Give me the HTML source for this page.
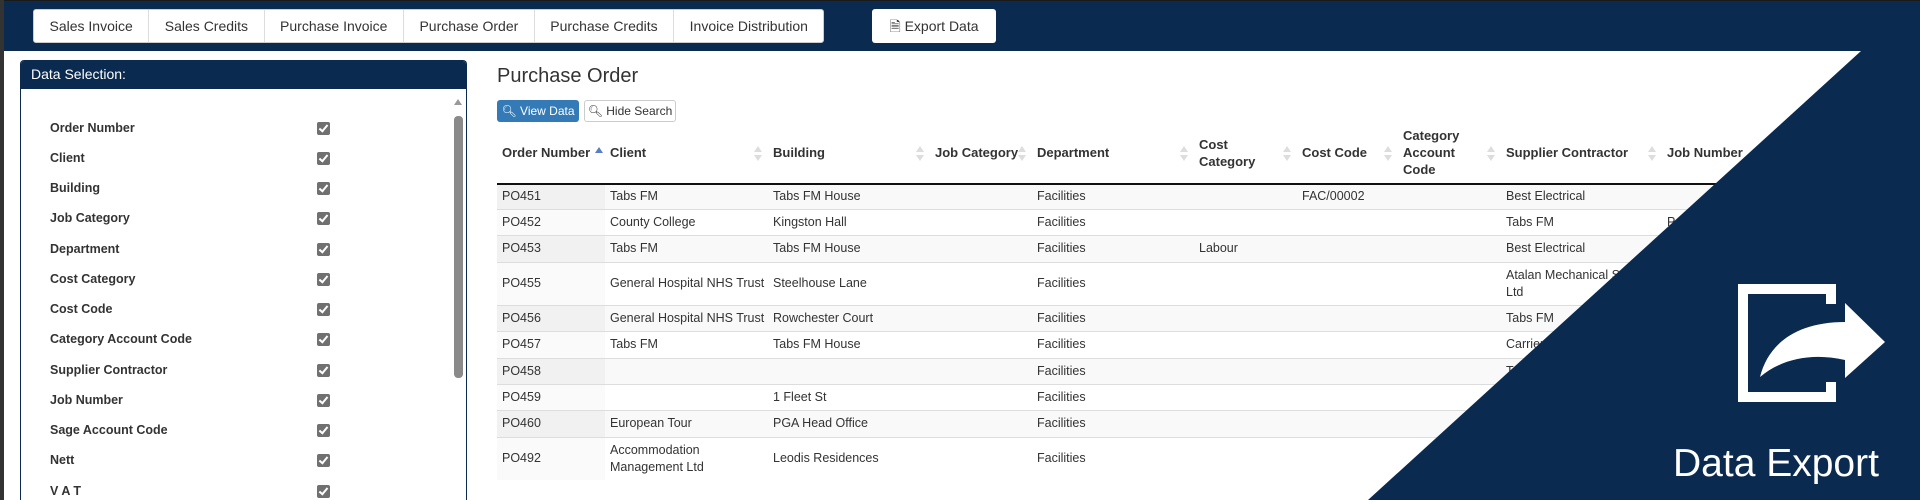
<!DOCTYPE html>
<html style="overflow:hidden;width:1920px;height:500px"><head><meta charset="utf-8"><style>
*{box-sizing:border-box;margin:0;padding:0}
body{width:1920px;height:500px;overflow:hidden;background:#fff;font-family:"Liberation Sans",Arial,sans-serif;color:#333;position:relative;font-size:13px}
.top{position:absolute;left:0;top:0;width:1920px;height:51px;background:#0b2a4f;border-top:1px solid #1a1a1a}
.strip{position:absolute;left:0;top:0;width:4px;height:500px;background:#333}
.tabs{position:absolute;left:33px;top:9px;height:34px;display:flex;background:#fff;border:1px solid #ccc;border-radius:3px}
.tabs div{height:32px;line-height:32px;padding:0 15.5px;font-size:14px;border-right:1px solid #ddd;color:#333}
.tabs div:last-child{border-right:none}
.exp{position:absolute;left:872px;top:9px;width:124px;height:34px;background:#fff;border-radius:3px;line-height:34px;font-size:14px;text-align:center}
.panel{position:absolute;left:20px;top:60px;width:447px;height:440px;border:1px solid #0b2a4f;border-bottom:none;border-radius:4px 4px 0 0;background:#fff;overflow:hidden}
.ph{height:28px;background:#0b2a4f;color:#fff;font-size:14px;line-height:26px;padding-left:10px}
.item{position:absolute;left:29px;font-size:12.5px;font-weight:bold;color:#333}
.cb{position:absolute;left:296px;width:13px;height:13px;background:#707070;border-radius:2px}
.cb:after{content:"";position:absolute;left:4px;top:1px;width:3px;height:7px;border:solid #fff;border-width:0 2px 2px 0;transform:rotate(40deg)}
.sb{position:absolute;left:433px;top:55px;width:9px;height:262px;background:#8a8a8a;border-radius:4px}
.sbu{position:absolute;left:433px;top:38px;width:0;height:0;border-left:4px solid transparent;border-right:4px solid transparent;border-bottom:6px solid #999}
h1{position:absolute;left:497px;top:65px;font-size:20px;font-weight:normal;color:#333}
.bv{position:absolute;left:497px;top:100px;width:82px;height:22px;background:#337ab7;border-radius:3px;color:#fff;font-size:12px;line-height:22px;text-align:center}
.bh{position:absolute;left:584px;top:100px;width:92px;height:22px;border:1px solid #ccc;border-radius:3px;font-size:12px;line-height:20px;text-align:center}
table{position:absolute;left:497px;top:122px;border-collapse:collapse;width:1500px;table-layout:fixed}
th{height:62px;text-align:left;font-weight:bold;padding:0 4px 0 5px;border-bottom:2px solid #111;position:relative;line-height:17px;font-size:13px;vertical-align:middle}
th .s{position:absolute;right:6px;top:24px;width:0;height:0;border-left:4px solid transparent;border-right:4px solid transparent;border-bottom:6px solid #ddd}
th .s:after{content:"";position:absolute;left:-4px;top:9px;border-left:4px solid transparent;border-right:4px solid transparent;border-top:6px solid #ddd}
th .up{position:absolute;left:98px;top:25px;border-left:4px solid transparent;border-right:4px solid transparent;border-bottom:6px solid #5a7dc4}
td{padding:0 4px 0 5px;border-top:1px solid #ddd;line-height:17px;font-size:12.5px;vertical-align:middle;white-space:nowrap;overflow:hidden}
td.w{white-space:normal}
tbody tr:nth-child(odd) td{background:#f9f9f9}
td:first-child{background:#f1f1f1!important}
tbody tr:nth-child(even) td:first-child{background:#fafafa!important}
.ov{position:absolute;left:0;top:0}
.de{position:absolute;left:1673px;top:442px;font-size:39px;color:#fff;font-family:"Liberation Sans",sans-serif}
</style></head><body>
<div class="top"></div><div class="strip"></div>
<div class="tabs"><div>Sales Invoice</div><div>Sales Credits</div><div>Purchase Invoice</div><div>Purchase Order</div><div>Purchase Credits</div><div>Invoice Distribution</div></div>
<div class="exp">🗎 Export Data</div>
<div class="panel"><div class="ph">Data Selection:</div>
<div class="sbu"></div><div class="sb"></div>
<div class="item" style="top:60px">Order Number</div><div class="cb" style="top:61px"></div>
<div class="item" style="top:90px">Client</div><div class="cb" style="top:91px"></div>
<div class="item" style="top:120px">Building</div><div class="cb" style="top:121px"></div>
<div class="item" style="top:150px">Job Category</div><div class="cb" style="top:151px"></div>
<div class="item" style="top:181px">Department</div><div class="cb" style="top:182px"></div>
<div class="item" style="top:211px">Cost Category</div><div class="cb" style="top:212px"></div>
<div class="item" style="top:241px">Cost Code</div><div class="cb" style="top:242px"></div>
<div class="item" style="top:271px">Category Account Code</div><div class="cb" style="top:272px"></div>
<div class="item" style="top:302px">Supplier Contractor</div><div class="cb" style="top:303px"></div>
<div class="item" style="top:332px">Job Number</div><div class="cb" style="top:333px"></div>
<div class="item" style="top:362px">Sage Account Code</div><div class="cb" style="top:363px"></div>
<div class="item" style="top:392px">Nett</div><div class="cb" style="top:393px"></div>
<div class="item" style="top:423px">V A T</div><div class="cb" style="top:424px"></div>
</div>
<h1>Purchase Order</h1>
<div class="bv">🔍︎ View Data</div><div class="bh">🔍︎ Hide Search</div>
<table>
<colgroup><col style="width:108px"><col style="width:163px"><col style="width:162px"><col style="width:102px"><col style="width:162px"><col style="width:103px"><col style="width:101px"><col style="width:103px"><col style="width:161px"><col style="width:200px"><col style="width:235px"></colgroup>
<thead><tr><th>Order Number<span class="up"></span></th><th>Client<span class="s"></span></th><th>Building<span class="s"></span></th><th>Job Category<span class="s"></span></th><th>Department<span class="s"></span></th><th>Cost<br>Category<span class="s"></span></th><th>Cost Code<span class="s"></span></th><th>Category<br>Account<br>Code<span class="s"></span></th><th>Supplier Contractor<span class="s"></span></th><th>Job Number</th><th></th></tr></thead>
<tbody>
<tr style="height:25px"><td>PO451</td><td>Tabs FM</td><td>Tabs FM House</td><td></td><td>Facilities</td><td></td><td>FAC/00002</td><td></td><td>Best Electrical</td><td></td><td></td></tr>
<tr style="height:26px"><td>PO452</td><td>County College</td><td>Kingston Hall</td><td></td><td>Facilities</td><td></td><td></td><td></td><td>Tabs FM</td><td>P</td><td></td></tr>
<tr style="height:27px"><td>PO453</td><td>Tabs FM</td><td>Tabs FM House</td><td></td><td>Facilities</td><td>Labour</td><td></td><td></td><td>Best Electrical</td><td></td><td></td></tr>
<tr style="height:43px"><td>PO455</td><td>General Hospital NHS Trust</td><td>Steelhouse Lane</td><td></td><td>Facilities</td><td></td><td></td><td></td><td class="w">Atalan Mechanical S<br>Ltd</td><td></td><td></td></tr>
<tr style="height:26px"><td>PO456</td><td>General Hospital NHS Trust</td><td>Rowchester Court</td><td></td><td>Facilities</td><td></td><td></td><td></td><td>Tabs FM</td><td></td><td></td></tr>
<tr style="height:27px"><td>PO457</td><td>Tabs FM</td><td>Tabs FM House</td><td></td><td>Facilities</td><td></td><td></td><td></td><td>Carrier</td><td></td><td></td></tr>
<tr style="height:26px"><td>PO458</td><td></td><td></td><td></td><td>Facilities</td><td></td><td></td><td></td><td>T</td><td></td><td></td></tr>
<tr style="height:26px"><td>PO459</td><td></td><td>1 Fleet St</td><td></td><td>Facilities</td><td></td><td></td><td></td><td></td><td></td><td></td></tr>
<tr style="height:27px"><td>PO460</td><td>European Tour</td><td>PGA Head Office</td><td></td><td>Facilities</td><td></td><td></td><td></td><td></td><td></td><td></td></tr>
<tr style="height:43px"><td>PO492</td><td class="w">Accommodation<br>Management Ltd</td><td>Leodis Residences</td><td></td><td>Facilities</td><td></td><td></td><td></td><td></td><td></td><td></td></tr>
</tbody></table>
<svg class="ov" width="1920" height="500"><polygon points="1861,51 1920,51 1920,500 1368,500" fill="#0b2a4f"/>
<path d="M1836,304 V284 H1738 V402 H1836 V382 H1826 V392 H1748 V294 H1826 V304 Z" fill="#fff"/>
<path d="M1760,377 C1768,345 1795,322 1845,322 V303 L1885,342 L1845,378 V360 C1810,352 1780,360 1760,377 Z" fill="#fff"/>
</svg>
<div class="de">Data Export</div>
</body></html>
